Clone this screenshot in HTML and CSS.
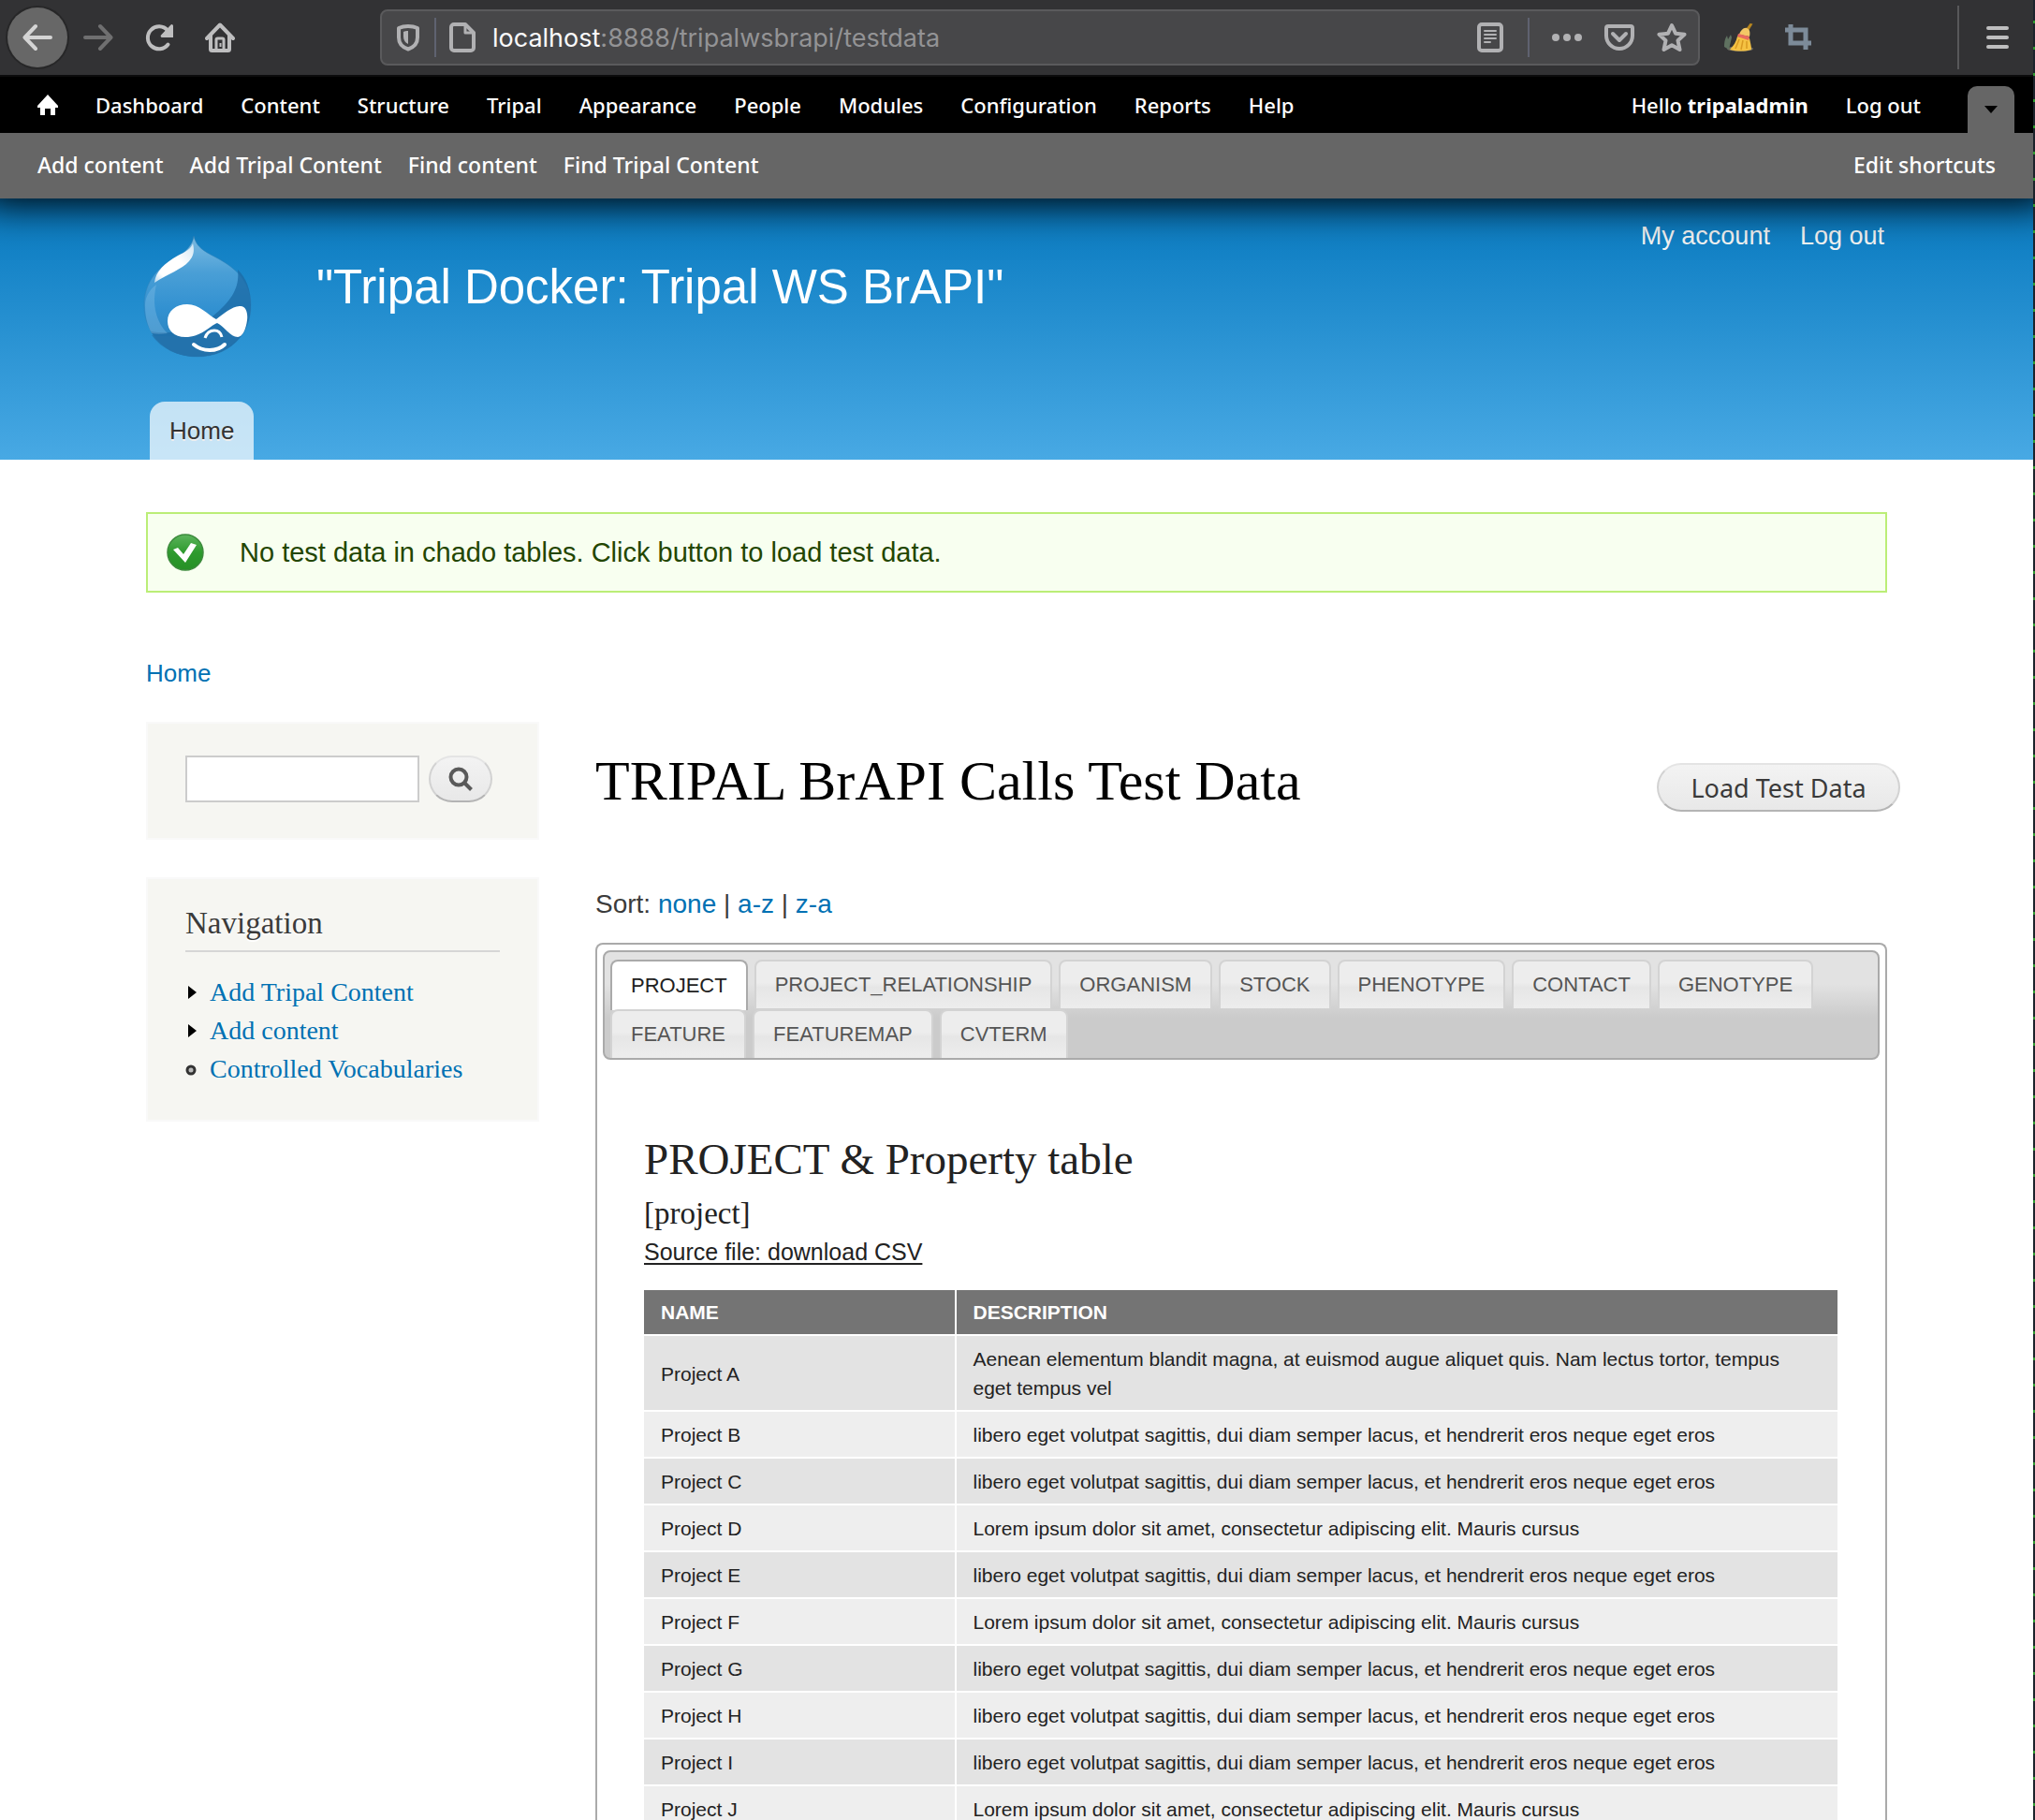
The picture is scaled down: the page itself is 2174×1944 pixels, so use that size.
FILE: index.html
```html
<!DOCTYPE html>
<html lang="en">
<head>
<meta charset="utf-8">
<title>TRIPAL BrAPI Calls Test Data</title>
<link rel="stylesheet" href="styles.css">
</head>
<body>
<div class="browser">
  <nav class="chrome" aria-label="Browser">
    <button class="chrome-btn back" aria-label="Back"><svg width="32" height="32" viewBox="0 0 32 32"><path d="M30 16H3M14 4L2.500 16 14 28" class="line w4"/></svg></button>
    <button class="chrome-btn dim" aria-label="Forward"><svg width="32" height="32" viewBox="0 0 32 32"><path d="M2 16h27M18 4l11.500 12L18 28" class="line w4"/></svg></button>
    <button class="chrome-btn" aria-label="Reload"><svg width="32" height="32" viewBox="0 0 32 32"><path d="M25.500 23.500A12 12 0 1 1 25 8.500" class="line w4"/><path d="M28.500 2.500a1.500 1.500 0 0 1 2.500 1V16H19a1.500 1.500 0 0 1-1-2.500z" class="solid"/></svg></button>
    <button class="chrome-btn" aria-label="Home"><svg width="32" height="32" viewBox="0 0 32 32"><path d="M2 17L16 2.500 30 17M6 14v14.500a1.500 1.500 0 0 0 1.500 1.500h17a1.500 1.500 0 0 0 1.500-1.500V14" class="line w4"/><path d="M12 30V18.500a1.500 1.500 0 0 1 1.500-1.500h5a1.500 1.500 0 0 1 1.500 1.500V30" class="line w3"/><path d="M15.500 22h2v4h-2z" class="solid"/></svg></button>
    <div class="urlbar">
      <svg width="28" height="32" viewBox="0 0 28 32"><path d="M14 4c4 0 7 .6 10 2v10c0 6-4 10.500-10 12.500C8 26.500 4 22 4 16V6c3-1.400 6-2 10-2z" class="line w4"/><path d="M14 9v14c-3-1.500-5-4-5-8V10c1.500-.7 3-1 5-1z" class="solid"/></svg>
      <span class="url-sep"></span>
      <svg width="28" height="32" viewBox="0 0 28 32"><path d="M17 2H5a3 3 0 0 0-3 3v22a3 3 0 0 0 3 3h18a3 3 0 0 0 3-3V11z" class="line w4"/><path d="M17 2v9h9" class="line w3"/></svg>
      <span class="url" role="textbox" aria-label="Address"><span class="host">localhost</span>:8888/tripalwsbrapi/testdata</span>
      <div class="url-tools">
        <svg width="32" height="32" viewBox="0 0 32 32"><rect x="4" y="2" width="24" height="28" rx="3" class="line w4"/><path d="M10 9h12M10 13h12M10 17h12M10 21h6" class="line w2"/></svg>
        <span class="url-sep"></span>
        <svg width="32" height="32" viewBox="0 0 32 32" class="solid"><circle cx="4" cy="16" r="4"/><circle cx="16" cy="16" r="4"/><circle cx="28" cy="16" r="4"/></svg>
        <svg width="32" height="32" viewBox="0 0 32 32"><path d="M4 4h24a2 2 0 0 1 2 2v8a14 14 0 0 1-28 0V6a2 2 0 0 1 2-2z" class="line w4"/><path d="M9 12l7 7 7-7" class="line w4"/></svg>
        <svg width="32" height="32" viewBox="0 0 32 32"><path d="M16 3l4 8.700 9.500 1-7 6.600 2 9.700-8.500-4.800L7.500 29l2-9.700-7-6.600 9.500-1z" class="line w4"/></svg>
      </div>
    </div>
    <button class="chrome-btn" aria-label="Clean up"><svg width="32" height="32" viewBox="0 0 32 32"><ellipse cx="18" cy="28" rx="14" ry="3" fill="#6d6a60"/><path d="M1 26c0-6 1-9 3-12l1 4 3-5 1 3-3 13z" fill="#5f7160"/><path d="M28.500 1l3 .5-5 8-3-1.500z" fill="#b8871f"/><path d="M17 13c1-4 5-8 8-7s4 4 3 9z" fill="#f3c766"/><path d="M15 15l13 2c1 5 2 8 2 12-7 2-15 2-23 0 4-4 7-9 8-14z" fill="#f5c243"/><path d="M16 12l12 3-1 4-12-4z" fill="#e86a5e"/><path d="M17 18l-4 10M21 19l-2 10M25 20v8" stroke="#d99a22" stroke-width="1.500" fill="none"/></svg></button>
    <button class="chrome-btn" aria-label="Crop"><svg width="32" height="32" viewBox="0 0 32 32"><path d="M7 2v20h22M1 8h22v21" fill="none" stroke="#7d8b99" stroke-width="5"/></svg></button>
    <span class="chrome-sep"></span>
    <button class="chrome-btn" aria-label="Menu"><svg width="32" height="32" viewBox="0 0 32 32"><path d="M6 6h20M6 16h20M6 26h20" class="line w4"/></svg></button>
  </nav>

  <div class="viewport">
    <div class="toolbar">
      <div class="admin-menu">
        <a href="#" class="admin-home" aria-label="Home"><svg width="22" height="22" viewBox="0 0 22 22"><path d="M11 0l11 12v2h-3v8h-5v-7H8v7H3v-8H0v-2z" fill="#fff"/></svg></a>
        <a href="#">Dashboard</a><a href="#">Content</a><a href="#">Structure</a><a href="#">Tripal</a><a href="#">Appearance</a><a href="#">People</a><a href="#">Modules</a><a href="#">Configuration</a><a href="#">Reports</a><a href="#">Help</a>
        <a href="#" class="push">Hello <strong>tripaladmin</strong></a><a href="#">Log out</a>
        <button class="drawer-toggle" aria-label="Hide shortcuts"><svg width="14" height="8" viewBox="0 0 14 8"><path d="M0 0h14L7 8z" fill="#000"/></svg></button>
      </div>
      <div class="shortcuts">
        <a href="#">Add content</a><a href="#">Add Tripal Content</a><a href="#">Find content</a><a href="#">Find Tripal Content</a>
        <a href="#" class="push">Edit shortcuts</a>
      </div>
    </div>

    <header class="header">
      <div class="brand">
        <svg class="logo" width="112" height="130" viewBox="0 0 112 130">
          <defs>
            <linearGradient id="drop" x1="0" y1="0" x2="0" y2="1"><stop offset="0" stop-color="#7fbde4"/><stop offset=".3" stop-color="#4a9fd6"/><stop offset=".6" stop-color="#3291d1"/><stop offset="1" stop-color="#2b7fb8"/></linearGradient>
            <linearGradient id="shine" x1="1" y1="0" x2="0" y2="1"><stop offset="0" stop-color="#fff" stop-opacity=".7"/><stop offset=".4" stop-color="#fff"/><stop offset=".8" stop-color="#fff"/><stop offset="1" stop-color="#fff" stop-opacity=".6"/></linearGradient>
          </defs>
          <path d="M51 0c2 9 7 14 18 20 22 11 43 25 43 54 0 33-25 55-57 55S-2 106-2 74c0-26 16-42 36-52C45 15 50 8 51 0z" fill="url(#drop)" stroke="#2b7fb8" stroke-opacity=".5"/>
          <path d="M98 36c9 9 14 21 14 38 0 33-25 55-57 55-22 0-40-10-50-27 22 4 48-1 66-16 22-18 29-32 27-50z" fill="#1d6ca6" opacity=".8"/>
          <path d="M6 106c16 2 30 2 44-4l55-4c-8 19-27 31-50 31-21 0-38-8-49-23z" fill="#2473ac" opacity=".8"/>
          <path d="M-1 74c0 11 2 21 7 30 5 1 11 1 17 0C11 92 6 74 11 52 3 58-1 66-1 74z" fill="#8cc4e8" opacity=".35"/>
          <path d="M50 8c2 8 1 13-4 19-8 9-22 13-37 23 1-12 11-21 25-29 8-4 14-7 16-13z" fill="url(#shine)"/>
          <path d="M44 73c13 0 22 11 31 16 8-6 17-14 26-14 6 0 8 8 7 15-1 9-5 18-10 18-8 0-14-11-22-15-9 4-17 15-34 15-12 0-19-7-19-17 0-11 9-18 21-18z" fill="#fff"/>
          <path d="M63 109c2-6 6-8 10-8s7 3 8 7" fill="none" stroke="#fff" stroke-width="3"/>
          <path d="M51 116c6 5 11 6 17 6s12-2 16-6" fill="none" stroke="#fff" stroke-width="4" stroke-linecap="round"/>
        </svg>
        <div class="site-name">"Tripal Docker: Tripal WS BrAPI"</div>
        <nav class="user-menu"><a href="#">My account</a><a href="#">Log out</a></nav>
      </div>
      <nav class="main-menu"><a href="#">Home</a></nav>
    </header>

    <div class="page">
      <div class="message" role="status">
        <svg width="40" height="40" viewBox="0 0 40 40"><defs><linearGradient id="ok" x1="0" y1="0" x2="0" y2="1"><stop offset="0" stop-color="#5cb45c"/><stop offset=".5" stop-color="#2e9a2e"/><stop offset="1" stop-color="#259025"/></linearGradient></defs><circle cx="20" cy="20" r="19" fill="url(#ok)" stroke="#3c8a3c" stroke-width="1.500"/><path d="M7 17l5-2 6 7 8-12 6 2-12 19z" fill="#fff"/></svg>
        <span>No test data in chado tables. Click button to load test data.</span>
      </div>
      <nav class="breadcrumb"><a href="#">Home</a></nav>

      <div class="columns">
        <aside class="sidebar">
          <form class="block search">
            <input type="text" aria-label="Search">
            <button type="button" class="pill" aria-label="Search"><svg width="26" height="26" viewBox="0 0 26 26"><circle cx="11" cy="11" r="8.500" fill="none" stroke="#5a5a5a" stroke-width="4"/><path d="M17 17l7.500 7.500" stroke="#5a5a5a" stroke-width="4"/></svg></button>
          </form>
          <section class="block nav-block">
            <h2>Navigation</h2>
            <ul>
              <li><svg width="14" height="14" viewBox="0 0 14 14"><path d="M3 0l9 7-9 7z"/></svg><a href="#">Add Tripal Content</a></li>
              <li><svg width="14" height="14" viewBox="0 0 14 14"><path d="M3 0l9 7-9 7z"/></svg><a href="#">Add content</a></li>
              <li><svg width="14" height="14" viewBox="0 0 14 14"><circle cx="6" cy="8" r="4" fill="#bbb" stroke="#333" stroke-width="3"/></svg><a href="#">Controlled Vocabularies</a></li>
            </ul>
          </section>
        </aside>

        <main class="main">
          <div class="title-row">
            <h1>TRIPAL BrAPI Calls Test Data</h1>
            <button class="pill load">Load Test Data</button>
          </div>
          <p class="sort">Sort: <a href="#">none</a> | <a href="#">a-z</a> | <a href="#">z-a</a></p>

          <div class="tabs">
            <div class="tab-list" role="tablist">
              <button class="tab selected" role="tab" aria-selected="true">PROJECT</button>
              <button class="tab" role="tab">PROJECT_RELATIONSHIP</button>
              <button class="tab" role="tab">ORGANISM</button>
              <button class="tab" role="tab">STOCK</button>
              <button class="tab" role="tab">PHENOTYPE</button>
              <button class="tab" role="tab">CONTACT</button>
              <button class="tab" role="tab">GENOTYPE</button>
              <button class="tab" role="tab">FEATURE</button>
              <button class="tab" role="tab">FEATUREMAP</button>
              <button class="tab" role="tab">CVTERM</button>
            </div>
            <section class="panel">
              <h2>PROJECT &amp; Property table</h2>
              <h3>[project]</h3>
              <p class="source"><a href="#">Source file: download CSV</a></p>
              <table>
                <thead><tr><th class="name">NAME</th><th>DESCRIPTION</th></tr></thead>
                <tbody>
                  <tr><td>Project A</td><td>Aenean elementum blandit magna, at euismod augue aliquet quis. Nam lectus tortor, tempus eget tempus vel</td></tr>
                  <tr><td>Project B</td><td>libero eget volutpat sagittis, dui diam semper lacus, et hendrerit eros neque eget eros</td></tr>
                  <tr><td>Project C</td><td>libero eget volutpat sagittis, dui diam semper lacus, et hendrerit eros neque eget eros</td></tr>
                  <tr><td>Project D</td><td>Lorem ipsum dolor sit amet, consectetur adipiscing elit. Mauris cursus</td></tr>
                  <tr><td>Project E</td><td>libero eget volutpat sagittis, dui diam semper lacus, et hendrerit eros neque eget eros</td></tr>
                  <tr><td>Project F</td><td>Lorem ipsum dolor sit amet, consectetur adipiscing elit. Mauris cursus</td></tr>
                  <tr><td>Project G</td><td>libero eget volutpat sagittis, dui diam semper lacus, et hendrerit eros neque eget eros</td></tr>
                  <tr><td>Project H</td><td>libero eget volutpat sagittis, dui diam semper lacus, et hendrerit eros neque eget eros</td></tr>
                  <tr><td>Project I</td><td>libero eget volutpat sagittis, dui diam semper lacus, et hendrerit eros neque eget eros</td></tr>
                  <tr><td>Project J</td><td>Lorem ipsum dolor sit amet, consectetur adipiscing elit. Mauris cursus</td></tr>
                </tbody>
              </table>
            </section>
          </div>
        </main>
      </div>
    </div>
  </div>
</div>
</body>
</html>
```
FILE: styles.css
```css
* { box-sizing: border-box; }
body {
  margin: 0;
  font-family: "Liberation Sans", Arial, sans-serif;
  font-size: 26px;
  color: #3b3b3b;
  background: #fff;
}
h1, h2, h3, p, ul { margin: 0; padding: 0; font-weight: 400; }
a { color: #0071b3; text-decoration: none; }
button { border: 0; padding: 0; background: none; font: inherit; color: inherit; }
svg { display: block; flex: none; }

.browser {
  display: flex;
  flex-direction: column;
  height: 100vh;
  padding-right: 2px;
  background: repeating-linear-gradient(#1c232b 0 22px, #2f9a2f 22px 25px, #1c232b 25px 28px);
}

/* browser bar */
.chrome {
  display: flex;
  align-items: center;
  flex: none;
  gap: 1px;
  height: 82px;
  padding: 0 6px 0 8px;
  background: #323234;
  border-bottom: 2px solid #0c0c0d;
  color: #bebebf;
}
.chrome-btn { display: flex; align-items: center; justify-content: center; flex: none; width: 64px; height: 64px; }
.back { border-radius: 50%; background: #676767; box-shadow: 0 0 0 2px #272728; color: #d4d4d4; }
.dim { color: #6f6f70; }
.line { fill: none; stroke: currentColor; stroke-linecap: round; stroke-linejoin: round; }
.solid { fill: currentColor; }
.w2 { stroke-width: 2; }
.w3 { stroke-width: 3; }
.w4 { stroke-width: 4; }
.urlbar {
  display: flex;
  align-items: center;
  flex: 1;
  gap: 14px;
  height: 60px;
  margin: 0 8px 0 138px;
  padding: 0 12px 0 14px;
  border: 2px solid #5a5a5c;
  border-radius: 8px;
  background: #474749;
  color: #b1b1b3;
}
.url-sep { width: 2px; height: 42px; background: #5f6270; }
.url { padding-left: 4px; font-family: Inter, "Liberation Sans", sans-serif; font-size: 27px; color: #939395; }
.host { color: #f9f9fa; }
.url-tools { display: flex; align-items: center; gap: 24px; margin-left: auto; }
.chrome-sep { width: 2px; height: 68px; margin: 0 8px 0 136px; background: #58585a; }

.viewport { flex: 1; min-height: 0; overflow: hidden; background: #fff; }

/* admin toolbar */
.toolbar {
  position: relative;
  z-index: 1;
  font-family: "Noto Sans", sans-serif;
  font-size: 22px;
  font-weight: 500;
  box-shadow: 0 -14px 40px 20px #000;
}
.toolbar a { color: #fff; }
.admin-menu { display: flex; align-items: center; gap: 40px; height: 60px; padding: 0 20px 0 40px; background: #000; }
.push { margin-left: auto; }
.drawer-toggle {
  display: flex;
  align-items: center;
  justify-content: center;
  align-self: flex-end;
  width: 50px;
  height: 50px;
  margin-left: 10px;
  border-radius: 10px 10px 0 0;
  background: #666;
}
.shortcuts { display: flex; align-items: center; gap: 28px; height: 70px; padding: 0 40px 2px; background: #666; font-size: 23px; }

/* site header */
.header { padding: 20px 156px 0; background: linear-gradient(#0779bf, #48a9e4); }
.brand { display: flex; align-items: flex-start; }
.logo { margin-top: 20px; overflow: visible; }
.site-name { margin: 45px 0 0 70px; font-size: 51px; line-height: 60px; color: #fff; }
.user-menu { display: flex; gap: 32px; margin: 0 3px 0 auto; font-size: 27px; line-height: 40px; }
.user-menu a { color: #f4f4f4; }
.main-menu { display: flex; margin-top: 47px; padding-left: 4px; line-height: 62px; }
.main-menu a {
  padding: 0 21px;
  border-radius: 16px 16px 0 0;
  background: rgba(255, 255, 255, .7);
  color: #333;
  text-shadow: 0 2px #eee;
}

.page { padding: 56px 156px 0; }
.message {
  display: flex;
  align-items: center;
  gap: 38px;
  height: 86px;
  padding: 0 20px;
  border: 2px solid #be7;
  background: #f8fff0;
  color: #234600;
  font-size: 29px;
}
.breadcrumb { margin: 66px 0 32px; line-height: 40px; }
.columns { display: flex; gap: 60px; align-items: flex-start; }

/* sidebar */
.sidebar { display: flex; flex-direction: column; gap: 40px; flex: none; width: 420px; }
.block { padding: 34px 40px 38px; border: 2px solid #f9f9f9; background: #f6f6f2; }
.search { display: flex; gap: 10px; }
.search input { width: 250px; height: 50px; border: 2px solid #ccc; background: #fff; font-size: 26px; }
.pill {
  display: flex;
  align-items: center;
  justify-content: center;
  width: 68px;
  height: 50px;
  border: 2px solid;
  border-color: #e4e4e4 #d2d2d2 #b4b4b4;
  border-radius: 26px;
  background: linear-gradient(#f3f3f3, #e8e8e8);
}
.nav-block { padding: 27px 40px 34px; font-family: "Liberation Serif", Georgia, serif; }
.nav-block h2 {
  padding-bottom: 9px;
  border-bottom: 2px solid #d6d6d6;
  font-size: 33px;
  line-height: 40px;
  text-shadow: 0 2px #fff;
}
.nav-block ul { margin-top: 22px; list-style: none; font-size: 28px; line-height: 41px; }
.nav-block li { display: flex; align-items: center; gap: 12px; }

/* main column */
.main { flex: 1; min-width: 0; }
.title-row { display: flex; align-items: flex-start; justify-content: space-between; margin: 27px -14px 76px 0; }
h1 { font-family: "Liberation Serif", Georgia, serif; font-size: 60px; line-height: 72px; color: #000; }
.load { width: 260px; height: 52px; margin-top: 17px; font-family: "Noto Sans", sans-serif; font-size: 27px; color: #3a3a3a; }
.sort { margin-bottom: 21px; font-size: 28px; line-height: 40px; }

.tabs { padding: 6px; border: 2px solid #aaa; border-bottom: 0; border-radius: 8px 8px 0 0; color: #222; }
.tab-list {
  display: flex;
  flex-wrap: wrap;
  gap: 1px 7px;
  padding: 8px 6px 0;
  border: 2px solid #aaa;
  border-radius: 8px;
  background: linear-gradient(#e2e2e2 0 30%, #cbcbcb 62%);
}
.tab {
  height: 52px;
  padding: 0 20px;
  border: 2px solid #d3d3d3;
  border-bottom: 0;
  border-radius: 8px 8px 0 0;
  background: linear-gradient(#ededed 45%, #e6e6e6 55%, #ededed);
  font-size: 22px;
  line-height: 50px;
  color: #555;
}
.selected { height: 54px; margin-bottom: -2px; border-color: #aaa; background: #fff; color: #212121; }

.panel { padding: 78px 45px 0 44px; }
.panel h2 { font-family: "Liberation Serif", Georgia, serif; font-size: 47px; line-height: 56px; }
.panel h3 { margin-top: 10px; font-family: "Liberation Serif", Georgia, serif; font-size: 33px; line-height: 40px; }
.source { margin-top: 3px; font-size: 25px; line-height: 36px; }
.source a { color: #222; text-decoration: underline; text-decoration-thickness: 2px; text-underline-offset: 3px; }
table { width: 100%; margin-top: 23px; border-spacing: 0; table-layout: fixed; font-size: 21px; line-height: 31px; }
th, td { padding: 9px 18px 8px; border-bottom: 2px solid #fff; text-align: left; }
th { padding-top: 8px; background: #747474; color: #fff; }
.name { width: 26%; }
th + th, td + td { border-left: 2px solid #fff; }
td { background: #eee; }
tr:nth-child(odd) td { background: #e3e3e3; }
```
